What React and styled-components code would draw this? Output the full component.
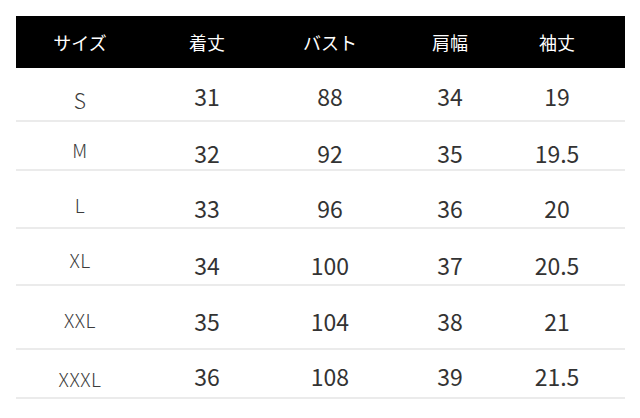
import styled, { createGlobalStyle } from "styled-components";

const GlobalStyle = createGlobalStyle`
  html, body {
    margin: 0;
    padding: 0;
    background: #ffffff;
  }
  body {
    font-family: "Noto Sans CJK JP", "Noto Sans", sans-serif;
  }
`;

const COLUMNS = "128px 126px 120px 120px 94px";

const Page = styled.div`
  padding: 16px 0 0 16px;
  width: 609px;
`;

const Table = styled.div`
  display: flex;
  flex-direction: column;
  width: 609px;
`;

const HeaderRow = styled.div`
  display: grid;
  grid-template-columns: ${COLUMNS};
  align-items: center;
  height: 52px;
  background: #000000;
`;

const HeaderCell = styled.div`
  text-align: center;
  color: #ffffff;
  font-size: 18px;
  line-height: 1;
`;

const Row = styled.div`
  display: grid;
  grid-template-columns: ${COLUMNS};
  align-items: start;
  box-sizing: border-box;
  height: ${(p) => p.$height}px;
  border-bottom: 2px solid #ebebeb;
`;

const SizeCell = styled.div`
  text-align: center;
  color: #3c3c3c;
  font-weight: 300;
  font-size: ${(p) => p.$size}px;
  letter-spacing: 0.5px;
  line-height: 1;
  padding-top: ${(p) => p.$pad}px;
`;

const ValueCell = styled.div`
  text-align: center;
  color: #333333;
  font-size: 23px;
  line-height: 1;
  padding-top: ${(p) => p.$pad}px;
`;

const headers = ["サイズ", "着丈", "バスト", "肩幅", "袖丈"];

const rows = [
  { size: "S", values: ["31", "88", "34", "19"], height: 54, labelSize: 21, labelPad: 22, valuePad: 17 },
  { size: "M", values: ["32", "92", "35", "19.5"], height: 49, labelSize: 19, labelPad: 18, valuePad: 20 },
  { size: "L", values: ["33", "96", "36", "20"], height: 58, labelSize: 19, labelPad: 24, valuePad: 26 },
  { size: "XL", values: ["34", "100", "37", "20.5"], height: 57, labelSize: 19, labelPad: 21, valuePad: 25 },
  { size: "XXL", values: ["35", "104", "38", "21"], height: 64, labelSize: 19, labelPad: 24, valuePad: 24 },
  { size: "XXXL", values: ["36", "108", "39", "21.5"], height: 49, labelSize: 19, labelPad: 19, valuePad: 15 },
];

export default function App() {
  return (
    <>
      <GlobalStyle />
      <Page>
        <Table>
          <HeaderRow>
            {headers.map((h) => (
              <HeaderCell key={h}>{h}</HeaderCell>
            ))}
          </HeaderRow>
          {rows.map((r) => (
            <Row key={r.size} $height={r.height}>
              <SizeCell $size={r.labelSize} $pad={r.labelPad}>
                {r.size}
              </SizeCell>
              {r.values.map((v, i) => (
                <ValueCell key={i} $pad={r.valuePad}>
                  {v}
                </ValueCell>
              ))}
            </Row>
          ))}
        </Table>
      </Page>
    </>
  );
}
